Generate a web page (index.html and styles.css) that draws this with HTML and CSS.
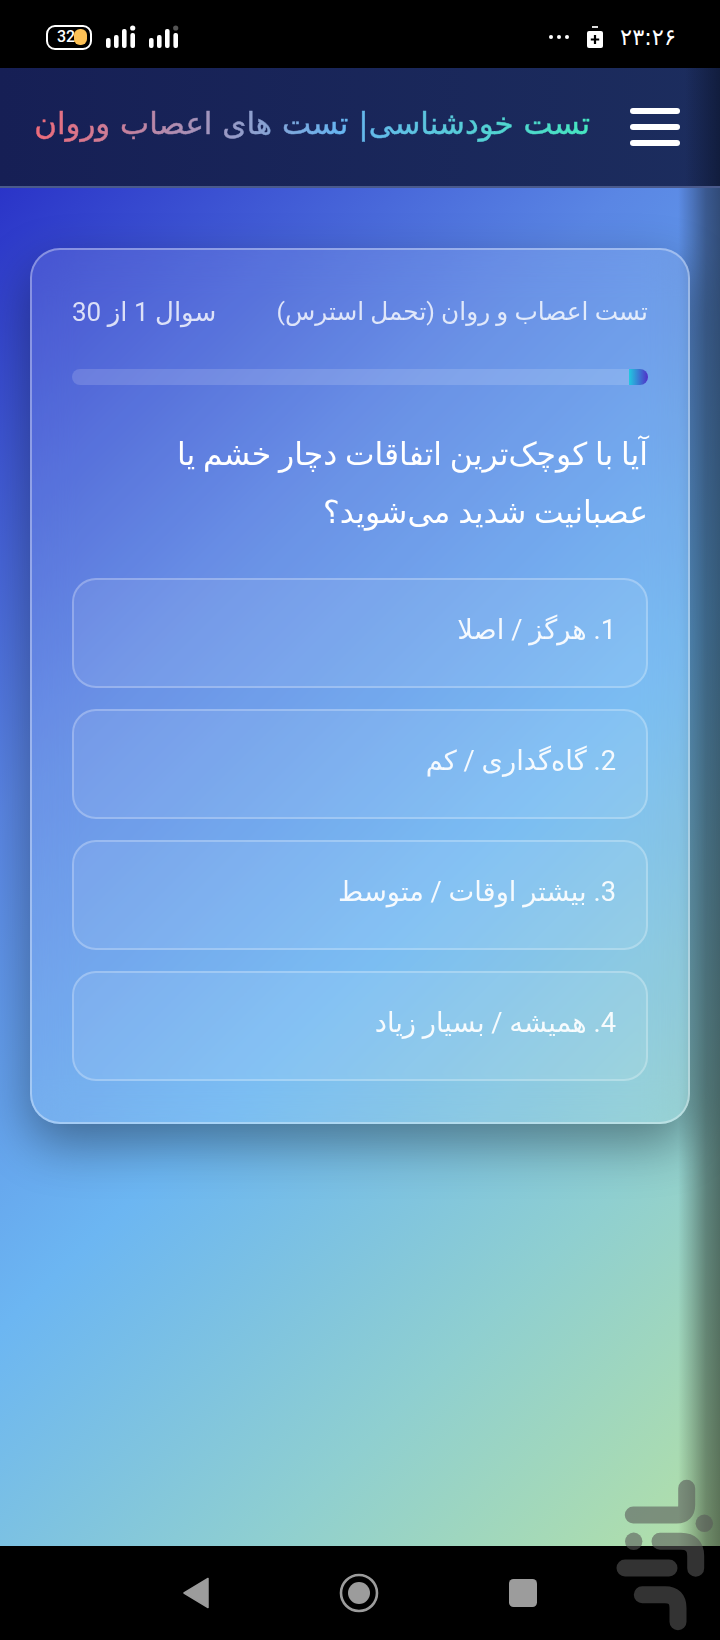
FILE: index.html
```html
<!DOCTYPE html>
<html lang="fa" dir="rtl">
<head>
<meta charset="utf-8">
<title>تست اعصاب و روان</title>
<link rel="stylesheet" href="styles.css">
</head>
<body>
<div class="phone">
  <div class="status" dir="ltr">
    <div class="status-left">
      <div class="battery"><span class="battery-num">32</span><span class="battery-dot"></span></div>
      <svg class="signal" width="30" height="24" viewBox="0 0 30 24"><g fill="#fff"><rect x="0" y="13" width="4.6" height="10" rx="2"/><rect x="8" y="10" width="4.6" height="13" rx="2"/><rect x="16" y="4" width="4.6" height="19" rx="2"/><rect x="24.4" y="8" width="4.6" height="15" rx="2"/><circle cx="26.7" cy="3" r="2.6"/></g></svg>
      <svg class="signal" width="30" height="24" viewBox="0 0 30 24"><g fill="#fff"><rect x="0" y="13" width="4.6" height="10" rx="2"/><rect x="8" y="10" width="4.6" height="13" rx="2"/><rect x="16" y="4" width="4.6" height="19" rx="2"/><rect x="24.4" y="8" width="4.6" height="15" rx="2"/><circle cx="26.7" cy="3" r="2.6" fill="#555"/></g></svg>
    </div>
    <div class="status-right">
      <svg width="22" height="6" viewBox="0 0 22 6"><g fill="#fff"><circle cx="3" cy="3" r="2"/><circle cx="11" cy="3" r="2"/><circle cx="19" cy="3" r="2"/></g></svg>
      <svg width="16" height="22" viewBox="0 0 16 22"><rect x="5" y="0" width="6" height="2" fill="#ddd"/><rect x="0" y="5" width="16" height="17" rx="2" fill="#fff"/><path d="M8 9v9M3.8 13.5h8.4" stroke="#000" stroke-width="2.2"/></svg>
      <span class="clock">۲۳:۲۶</span>
    </div>
  </div>

  <header class="topbar">
    <div class="menu"><span></span><span></span><span></span></div>
    <h1 class="title">تست خودشناسی| تست های اعصاب وروان</h1>
  </header>

  <main class="content">
    <section class="card">
      <div class="meta">
        <span>تست اعصاب و روان (تحمل استرس)</span>
        <span class="meta-count">سوال 1 از 30</span>
      </div>
      <div class="progress"><div class="progress-fill"></div></div>
      <p class="question">آیا با کوچک‌ترین اتفاقات دچار خشم یا عصبانیت شدید می‌شوید؟</p>
      <div class="options">
        <div class="option">1. هرگز / اصلا</div>
        <div class="option">2. گاه‌گداری / کم</div>
        <div class="option">3. بیشتر اوقات / متوسط</div>
        <div class="option">4. همیشه / بسیار زیاد</div>
      </div>
    </section>
  </main>

  <nav class="navbar">
    <svg width="26" height="32" viewBox="0 0 26 32"><path d="M25 1.5V30.5L1 16Z" fill="#9c9c9c" stroke="#9c9c9c" stroke-width="1.5" stroke-linejoin="round"/></svg>
    <svg width="40" height="40" viewBox="0 0 40 40"><circle cx="20" cy="20" r="18" fill="none" stroke="#9c9c9c" stroke-width="2.6"/><circle cx="20" cy="20" r="11" fill="#9c9c9c"/></svg>
    <svg width="28" height="28" viewBox="0 0 28 28"><rect width="28" height="28" rx="4.5" fill="#9c9c9c"/></svg>
  </nav>

  <svg class="watermark" width="100" height="160" viewBox="0 0 100 160"><g fill="none" stroke="#585858" stroke-width="17" stroke-linecap="round"><path d="M71.7 10.3V27Q71.7 37 61.7 37H18.3"/><path d="M45 63.3H66Q80.7 63.3 80.7 78V90.3"/><path d="M10 90H54"/><path d="M27.3 116.7H50Q63 116.7 63 130V143.7"/></g><circle cx="89.3" cy="45.3" r="8.7" fill="#585858"/><circle cx="18.7" cy="63.3" r="8.7" fill="#585858"/></svg>
</div>
</body>
</html>
```

FILE: styles.css
```css
* { box-sizing: border-box; }
html, body { margin: 0; padding: 0; }
body {
  width: 720px;
  height: 1640px;
  overflow: hidden;
  font-family: Roboto, "DejaVu Sans", sans-serif;
  color: #fff;
  background: #000;
}
.phone {
  position: relative;
  width: 720px;
  height: 1640px;
  display: flex;
  flex-direction: column;
  overflow: hidden;
}
.status {
  height: 68px;
  background: #000;
  display: flex;
  align-items: center;
  justify-content: space-between;
  padding: 6px 44px 0 46px;
  flex: none;
}
.status-left, .status-right { display: flex; align-items: center; }
.status-left { gap: 13px; }
.status-right { gap: 17px; }
.battery {
  position: relative;
  width: 46px;
  height: 25px;
  border: 2.5px solid #fff;
  border-radius: 9px;
  margin-right: 1px;
}
.battery-num {
  position: absolute;
  left: 9px;
  top: 1px;
  font-size: 16px;
  line-height: 18px;
  font-weight: 500;
  z-index: 1;
}
.battery-dot {
  position: absolute;
  left: 26px;
  top: 2px;
  width: 13px;
  height: 16px;
  border-radius: 6px;
  background: #fdc155;
}
.clock { font-family: "DejaVu Sans", sans-serif; font-size: 22.5px; line-height: 24px; }
.topbar {
  height: 120px;
  flex: none;
  display: flex;
  align-items: center;
  gap: 40px;
  padding: 0 40px 0 30px;
  background:
    linear-gradient(90deg, rgba(10, 18, 40, 0) 685px, rgba(10, 18, 40, 0.6) 720px),
    linear-gradient(90deg, #161f55 0%, #1c2d5e 100%);
  border-bottom: 2px solid #4a5a8c;
}
.menu { display: flex; flex-direction: column; gap: 10px; width: 50px; flex: none; }
.menu span { display: block; height: 6px; border-radius: 3px; background: #fff; }
.title {
  margin: 0 0 8px;
  flex: 1;
  font-family: "DejaVu Sans", sans-serif;
  font-size: 30.9px;
  line-height: 44px;
  font-weight: 400;
  white-space: nowrap;
  background: linear-gradient(270deg, #45e6c0 0%, #68b4f0 45%, #f06a78 100%);
  -webkit-background-clip: text;
  background-clip: text;
  color: transparent;
  -webkit-text-stroke: 0.5px transparent;
}
.content {
  flex: 1;
  padding: 60px 30px 0;
  background:
    linear-gradient(90deg, rgba(0, 0, 0, 0) 678px, rgba(0, 0, 0, 0.18) 692px, rgba(0, 0, 0, 0.38) 706px, rgba(0, 0, 0, 0.48) 720px),
    linear-gradient(135deg, #2a34c8 0%, #5a86e4 30%, #6cb6f2 55%, #8fcfd0 78%, #b4e0a6 100%);
}
.card {
  height: 876px;
  padding: 40px;
  border: 2px solid rgba(255, 255, 255, 0.35);
  border-radius: 30px;
  background: rgba(255, 255, 255, 0.1);
  box-shadow: 0 20px 50px rgba(0, 0, 0, 0.38);
  -webkit-backdrop-filter: blur(20px);
  backdrop-filter: blur(20px);
}
.meta {
  display: flex;
  justify-content: space-between;
  font-size: 24.8px;
  line-height: 36px;
  color: rgba(255, 255, 255, 0.8);
  margin-top: 4px;
}
.meta-count { font-size: 26px; }
.progress {
  margin-top: 39px;
  height: 16px;
  border-radius: 8px;
  background: rgba(255, 255, 255, 0.15);
  overflow: hidden;
}
.progress-fill {
  width: 19px;
  height: 16px;
  background: linear-gradient(90deg, #22c8e0, #5030c8);
}
.question {
  margin: 41px 0 0;
  font-size: 31.4px;
  line-height: 58px;
  font-weight: 400;
}
.options { margin-top: 36px; display: flex; flex-direction: column; gap: 21px; }
.option {
  height: 110px;
  border: 2px solid rgba(255, 255, 255, 0.25);
  border-radius: 24px;
  background: rgba(255, 255, 255, 0.08);
  padding: 0 30px;
  font-size: 27.3px;
  line-height: 100px;
  color: rgba(255, 255, 255, 0.92);
}
.navbar {
  height: 94px;
  flex: none;
  background: #000;
  display: flex;
  align-items: center;
  justify-content: center;
  gap: 130px;
  direction: ltr;
}
.watermark {
  position: absolute;
  left: 615px;
  top: 1478px;
  opacity: 0.58;
}
```
